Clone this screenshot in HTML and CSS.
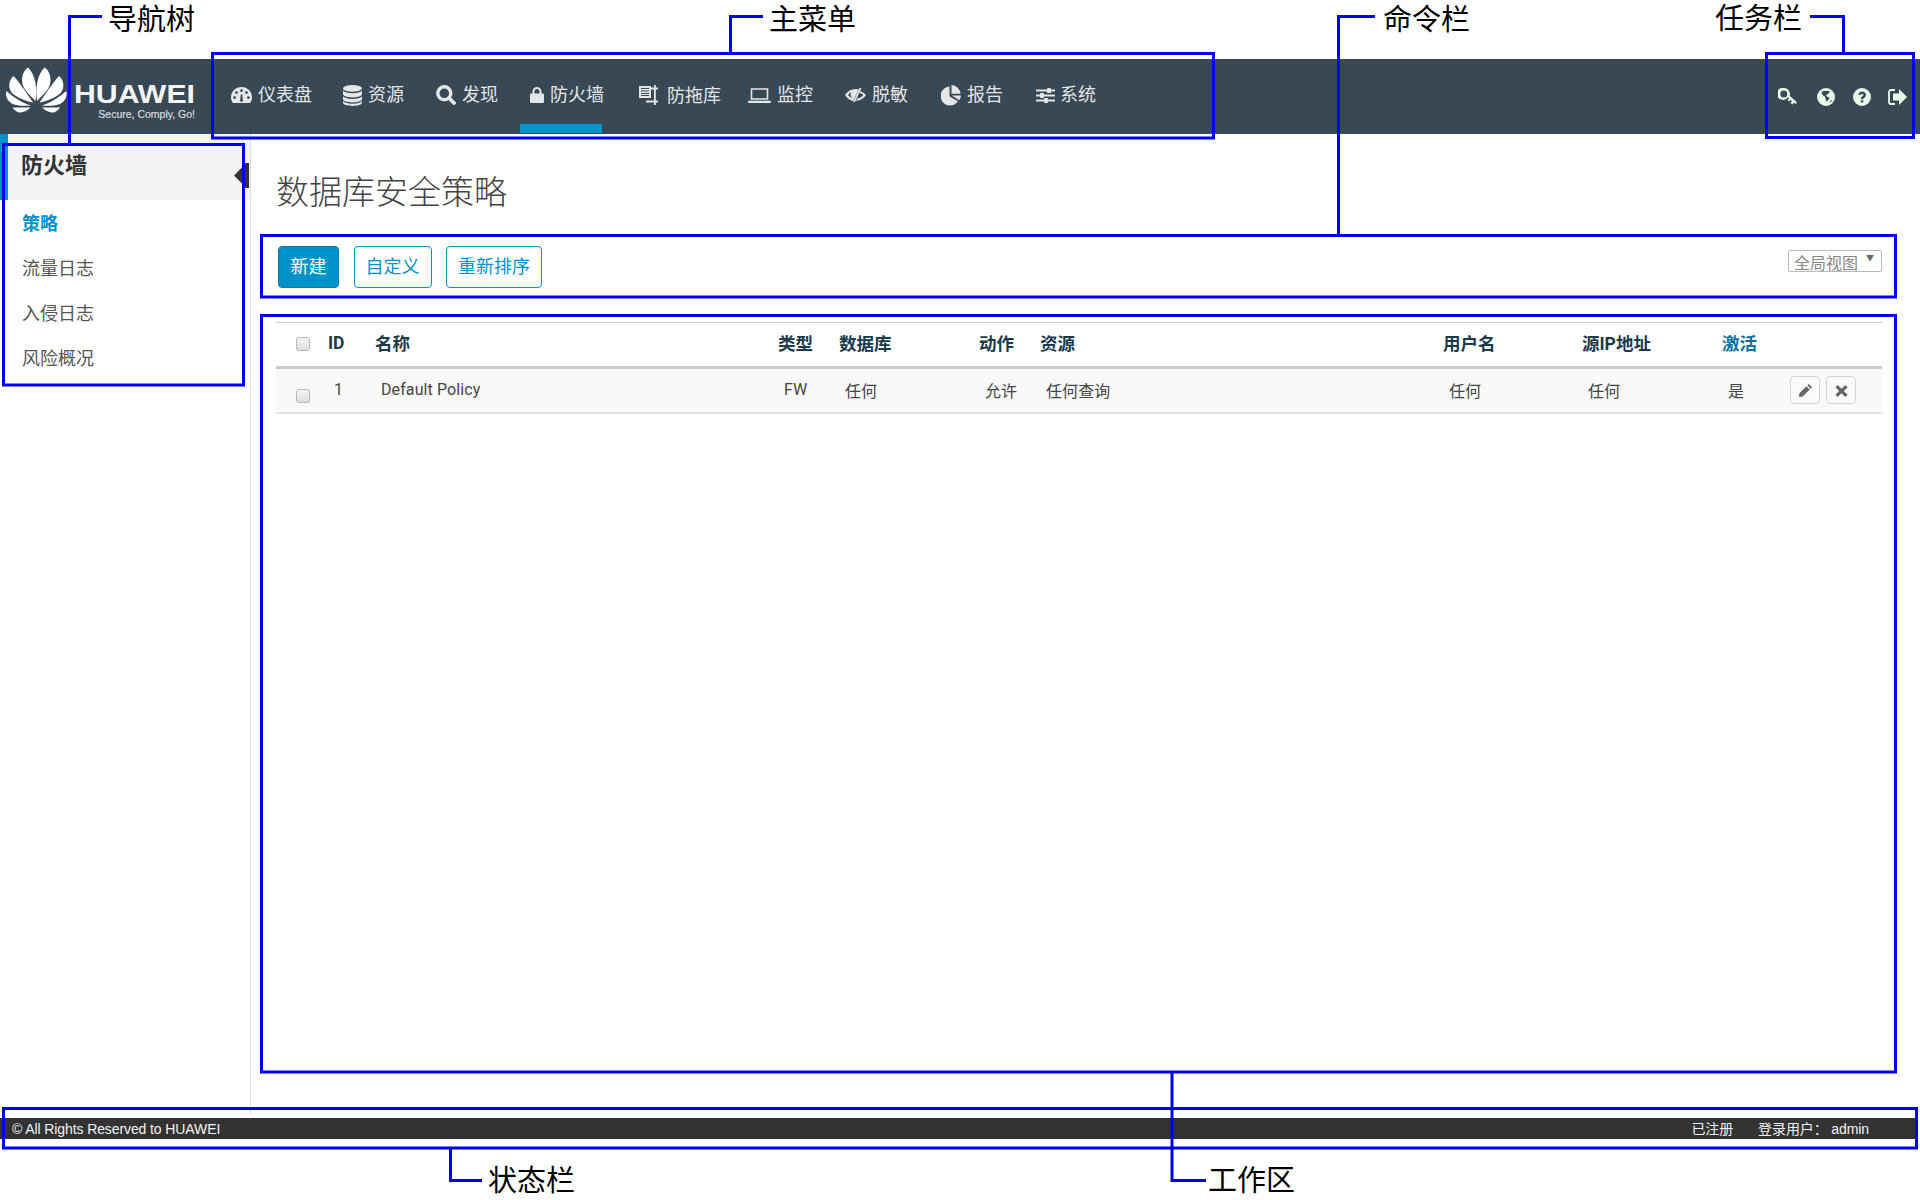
FILE: index.html
```html
<!DOCTYPE html>
<html lang="zh-CN">
<head>
<meta charset="utf-8">
<title>数据库安全策略</title>
<link rel="stylesheet" href="styles.css">
</head>
<body>
<div class="page">
  <header class="topbar">
    <div class="brand">
      <svg class="petals" viewBox="0 0 72 48" aria-hidden="true">
        <path d="M35.500 34C37.500 21 35.500 8 28 .5C23.500 3.500 21 10 22.500 17C24.500 24 31 29 35.500 34Z"/>
        <path d="M33 35.500C28 28 20 16 13.500 9C8 14 8 22 12.500 26.500C18.500 31.500 26 34 33 35.500Z"/>
        <path d="M31 38.500C22 36 13 30 6.500 24C4.500 30 9 36 14 37.500C19 39 25 39 31 38.500Z"/>
        <path d="M30.500 40.500L12.500 40.500C14.500 43.500 18 46 21 45.500C25 45 28 43 30.500 40.500Z"/>
        <g transform="matrix(-1 0 0 1 72.600 0)">
          <path d="M35.500 34C37.500 21 35.500 8 28 .5C23.500 3.500 21 10 22.500 17C24.500 24 31 29 35.500 34Z"/>
          <path d="M33 35.500C28 28 20 16 13.500 9C8 14 8 22 12.500 26.500C18.500 31.500 26 34 33 35.500Z"/>
          <path d="M31 38.500C22 36 13 30 6.500 24C4.500 30 9 36 14 37.500C19 39 25 39 31 38.500Z"/>
          <path d="M30.500 40.500L12.500 40.500C14.500 43.500 18 46 21 45.500C25 45 28 43 30.500 40.500Z"/>
        </g>
      </svg>
      <div class="wordmark">
        <span class="wordmark-name">HUAWEI</span>
        <span class="wordmark-tag">Secure, Comply, Go!</span>
      </div>
    </div>
    <nav class="mainmenu">
      <a class="menu-item m1">
        <svg class="ic ic-gauge" viewBox="0 0 21 16"><path fill-rule="evenodd" d="M10.500 0C4.700 0 0 4.600 0 10.300C0 12.200.5 14 1.400 15.500C1.600 15.800 1.900 16 2.300 16H18.700C19.100 16 19.400 15.800 19.600 15.500C20.500 14 21 12.200 21 10.300C21 4.600 16.300 0 10.500 0ZM3.600 12A1.400 1.400 0 1 1 3.600 9.200A1.400 1.400 0 0 1 3.600 12ZM5.500 7A1.400 1.400 0 1 1 5.500 4.200A1.400 1.400 0 0 1 5.500 7ZM10.500 5A1.400 1.400 0 1 1 10.500 2.200A1.400 1.400 0 0 1 10.500 5ZM9 14.500L9.800 7.500H11.200L12 14.500ZM15.500 7A1.400 1.400 0 1 1 15.500 4.200A1.400 1.400 0 0 1 15.500 7ZM17.400 12A1.400 1.400 0 1 1 17.400 9.200A1.400 1.400 0 0 1 17.400 12Z"/></svg>
        <span>仪表盘</span>
      </a>
      <a class="menu-item m2">
        <svg class="ic ic-db" viewBox="0 0 19 21"><ellipse cx="9.500" cy="3.400" rx="9.500" ry="3.400"/><path d="M0 5.600C1.500 7.400 5 8.300 9.500 8.300S17.500 7.400 19 5.600V9C19 11 15 12.400 9.500 12.400S0 11 0 9Z"/><path d="M0 11.200C1.500 13 5 13.900 9.500 13.900S17.500 13 19 11.200V14C19 16 15 17.400 9.500 17.400S0 16 0 14Z"/><path d="M0 16C1.500 17.800 5 18.800 9.500 18.800S17.500 17.800 19 16V17.600C19 19.600 15 21 9.500 21S0 19.600 0 17.600Z"/></svg>
        <span>资源</span>
      </a>
      <a class="menu-item m3">
        <svg class="ic ic-search" viewBox="0 0 20 20"><circle cx="8.300" cy="8.300" r="6.500" fill="none" stroke="currentColor" stroke-width="3.400"/><path d="M13 13L18 18" fill="none" stroke="currentColor" stroke-width="3.800" stroke-linecap="round"/></svg>
        <span>发现</span>
      </a>
      <a class="menu-item m4 is-active">
        <svg class="ic ic-lock" viewBox="0 0 14 16"><path d="M3.500 7V4.500a3.500 3.500 0 0 1 7 0V7" fill="none" stroke="currentColor" stroke-width="2"/><rect y="6.500" width="14" height="9.500" rx="1.200"/></svg>
        <span>防火墙</span>
      </a>
      <a class="menu-item m5">
        <svg class="ic ic-drag" viewBox="0 0 19 20"><path d="M0 1H12V13H0ZM2 3V4H10V3ZM2 5.500V6.500H10V5.500ZM2 8V9H10V8ZM2 10V11H10V10Z" fill-rule="evenodd"/><path d="M15 0H16.800V20H15V0ZM11 2.500H19V4.500H11ZM7 15.500H19V17.500H7Z"/></svg>
        <span>防拖库</span>
      </a>
      <a class="menu-item m6">
        <svg class="ic ic-laptop" viewBox="0 0 23 15"><path d="M3.500 1H19.500V11H3.500Z" fill="none" stroke="currentColor" stroke-width="1.600"/><rect y="12.800" width="23" height="2.200" rx="1"/></svg>
        <span>监控</span>
      </a>
      <a class="menu-item m7">
        <svg class="ic ic-eye" viewBox="0 0 21 14"><path fill-rule="evenodd" d="M0 7C2.500 3 6.500 1 10.500 1C11.500 1 12.500 1.100 13.500 1.400L8 13C5 12.300 2 10.200 0 7ZM3 7C4 8.300 5.500 9.500 7 10.200L5.600 7.200C5.500 5.800 5.800 4.700 6.500 3.900C5.200 4.600 4 5.700 3 7Z"/><path d="M14.500 0H16.500L10 14H8Z"/><path d="M14.800 3C17.300 4 19.500 5.200 21 7C19 10 15.500 12.500 11 13L12.500 10.400C15 10 17 8.800 18.300 7C17.200 6 16 5.200 14 4.800Z"/></svg>
        <span>脱敏</span>
      </a>
      <a class="menu-item m8">
        <svg class="ic ic-pie" viewBox="0 0 20 21"><path d="M8.500 1.500A9.500 9.500 0 1 0 17 16.200L8.500 11.500Z"/><path d="M10.500 0A9.500 9.500 0 0 1 19.500 8.800H10.500Z"/><path d="M10.800 10.500H20A9.500 9.500 0 0 1 18.400 15.200Z"/></svg>
        <span>报告</span>
      </a>
      <a class="menu-item m9">
        <svg class="ic ic-sliders" viewBox="0 0 19 15"><path d="M0 1.500H19V3.500H0ZM0 6.500H19V8.500H0ZM0 11.500H19V13.500H0Z"/><rect x="11" y="0" width="4" height="5" rx=".8"/><rect x="4" y="5" width="4" height="5" rx=".8"/><rect x="8" y="10" width="4" height="5" rx=".8"/></svg>
        <span>系统</span>
      </a>
    </nav>
    <div class="taskbar">
      <svg class="task-ic task-key" viewBox="0 0 19 18"><path fill-rule="evenodd" d="M6 0A6 6 0 0 1 11.700 7.700L19 14.500L17.500 16L16 14.600L14.500 16.500L12.500 15L14 13.200L12.500 11.900L11 13.500L9.500 12L11 10.400L9.900 9.300A6 6 0 1 1 6 0ZM5.800 2.500A3.500 3.500 0 1 0 5.800 9.500A3.500 3.500 0 0 0 5.800 2.500Z"/></svg>
      <svg class="task-ic task-globe" viewBox="0 0 18 18"><path fill-rule="evenodd" d="M9 0A9 9 0 1 1 9 18A9 9 0 0 1 9 0ZM4.500 4C5 6.500 6 8 8 8.500C8.500 10 8.500 12 10 13.500C11 12.500 12 11.500 12.500 10C11 9 9.500 8.500 9 7C10.500 6.500 12.500 5.500 12.800 3.500C10.500 2.300 7 2.500 4.500 4ZM14 12C13.500 13 13 14 12 15C13.500 14.500 14.500 13.500 15 12Z"/></svg>
      <svg class="task-ic task-help" viewBox="0 0 18 18"><path fill-rule="evenodd" d="M9 0A9 9 0 1 1 9 18A9 9 0 0 1 9 0ZM5.200 6.200L7.400 7.300C7.700 6.500 8.200 6 9 6C9.800 6 10.400 6.400 10.400 7C10.400 8.100 7.900 8.500 7.900 10.700V11.300H10.300C10.300 9.700 13 9.300 13 6.900C13 4.900 11.200 3.600 9.100 3.600C7.300 3.600 6 4.600 5.200 6.200ZM7.900 12.200V14.500H10.300V12.200Z"/></svg>
      <svg class="task-ic task-out" viewBox="0 0 19 16"><path d="M7 1H3A2 2 0 0 0 1 3V13A2 2 0 0 0 3 15H7" fill="none" stroke="currentColor" stroke-width="1.800"/><path d="M11 0L19 8L11 16V11.500H5V4.500H11Z"/></svg>
    </div>
  </header>

  <div class="body">
    <aside class="sidebar">
      <div class="side-head"><h2 class="side-title">防火墙</h2><span class="collapse"></span></div>
      <ul class="side-list">
        <li class="side-item is-current">策略</li>
        <li class="side-item">流量日志</li>
        <li class="side-item">入侵日志</li>
        <li class="side-item">风险概况</li>
      </ul>
    </aside>
    <main class="main">
      <h1 class="page-title">数据库安全策略</h1>
      <div class="commands">
        <div class="cmd-buttons">
          <button class="btn btn-primary">新建</button>
          <button class="btn">自定义</button>
          <button class="btn">重新排序</button>
        </div>
        <div class="view-select"><span>全局视图</span><i class="view-caret">▼</i></div>
      </div>
      <table class="grid">
        <colgroup>
          <col class="c-check"><col class="c-id"><col class="c-name"><col class="c-type"><col class="c-db"><col class="c-act"><col class="c-res"><col class="c-user"><col class="c-ip"><col class="c-on"><col class="c-ops">
        </colgroup>
        <thead>
          <tr>
            <th><input class="check" type="checkbox"></th>
            <th>ID</th><th>名称</th><th>类型</th><th>数据库</th><th>动作</th><th>资源</th><th>用户名</th><th>源IP地址</th><th class="is-sorted">激活</th><th></th>
          </tr>
        </thead>
        <tbody>
          <tr>
            <td class="cell-check"><input class="check" type="checkbox"></td>
            <td>1</td><td>Default Policy</td><td>FW</td><td>任何</td><td>允许</td><td>任何查询</td><td>任何</td><td>任何</td><td>是</td>
            <td class="cell-ops">
              <button class="op"><svg viewBox="0 0 16 16"><path d="M11.500 1L15 4.500L13.500 6L10 2.500ZM9 3.500L12.500 7L5 14.500L1 15L1.500 11Z"/></svg></button>
              <button class="op"><svg viewBox="0 0 16 16"><path d="M4 2L8 6L12 2L14.500 4.500L10.500 8.500L14.500 12.500L12 15L8 11L4 15L1.500 12.500L5.500 8.500L1.500 4.500Z"/></svg></button>
            </td>
          </tr>
        </tbody>
      </table>
    </main>
  </div>

  <footer class="statusbar">
    <span>© All Rights Reserved to HUAWEI</span>
    <span class="status-right"><span>已注册</span><span>登录用户： admin</span></span>
  </footer>
</div>

<svg class="marks" viewBox="0 0 1920 1200" aria-hidden="true">
  <rect x="212.500" y="53.500" width="1001" height="84.500"/>
  <rect x="3.500" y="144.500" width="240" height="240.500"/>
  <rect x="261.500" y="235.500" width="1634" height="61.500"/>
  <rect x="261.500" y="315.500" width="1634" height="756.500"/>
  <rect x="1766.500" y="53.500" width="147" height="84"/>
  <rect x="3.500" y="1108.500" width="1913" height="39.500"/>
  <path d="M102 16.500H69.500V143"/>
  <path d="M763 16.500H730.500V52"/>
  <path d="M1375 16.500H1338.500V234"/>
  <path d="M1810 16.500H1843.500V52"/>
  <path d="M450.500 1149V1180.500H482"/>
  <path d="M1172 1073V1180.500H1206"/>
</svg>
<span class="mark-label l-nav">导航树</span>
<span class="mark-label l-menu">主菜单</span>
<span class="mark-label l-cmd">命令栏</span>
<span class="mark-label l-task">任务栏</span>
<span class="mark-label l-status">状态栏</span>
<span class="mark-label l-work">工作区</span>
</body>
</html>
```

FILE: styles.css
```css
* { box-sizing: border-box; }
html, body { margin: 0; height: 100%; overflow: hidden; }
body {
  position: relative;
  background: #fff;
  color: #333;
  font-family: Roboto, "Noto Sans CJK SC", sans-serif;
}
.page { display: flex; flex-direction: column; height: 1200px; padding-top: 59px; }

/* top bar */
.topbar {
  display: flex;
  align-items: stretch;
  height: 75px;
  flex: none;
  background: #384854;
  color: #e4e6e8;
}
.brand { width: 228px; flex: none; display: flex; padding: 8px 0 0 0; color: #fff; }
.petals { width: 72px; height: 48px; fill: #fff; flex: none; }
.wordmark { display: flex; flex-direction: column; align-items: flex-end; width: 119px; margin-left: 4px; padding-top: 15px; }
.wordmark-name {
  font: 700 25px/25px "Liberation Sans", sans-serif;
  color: #f4f5f6;
  transform: scaleX(1.21);
  transform-origin: right;
}
.wordmark-tag { font: 400 10.500px/12px "Liberation Sans", sans-serif; color: #d8dcdf; margin-top: 1px; -webkit-text-stroke: .2px #d8dcdf; }

.mainmenu { display: flex; flex: none; padding-left: 3px; }
.menu-item {
  display: flex;
  align-items: center;
  height: 75px;
  padding-bottom: 3px;
  font-size: 18px;
  line-height: 24px;
  white-space: nowrap;
}
.menu-item span { display: block; }
.ic { display: block; flex: none; fill: currentColor; margin-right: 6px; }
.ic-gauge { width: 21px; height: 16px; }
.ic-db { width: 19px; height: 21px; }
.ic-search { width: 20px; height: 20px; }
.ic-lock { width: 14px; height: 16px; }
.ic-drag { width: 19px; height: 20px; margin-right: 9px; }
.ic-laptop { width: 23px; height: 15px; }
.ic-eye { width: 21px; height: 14px; }
.ic-pie { width: 20px; height: 21px; }
.ic-sliders { width: 19px; height: 15px; margin-right: 5px; }
.m1 { width: 112px; }
.m2 { width: 93px; }
.m3 { width: 94px; }
.m4 { width: 109px; position: relative; }
.m5 { width: 109px; }
.m5 span { padding-top: 2px; }
.m6 { width: 97px; }
.m7 { width: 96px; }
.m8 { width: 95px; }
.m4.is-active::after {
  content: "";
  position: absolute;
  left: -10px;
  bottom: 1px;
  width: 82px;
  height: 9px;
  background: #0093c9;
}
.taskbar { margin-left: auto; color: #ebfbe9; display: flex; align-items: flex-start; padding: 29px 13px 0 0; }
.task-ic { display: block; fill: currentColor; flex: none; }
.task-key { width: 19px; height: 18px; margin-right: 20px; }
.task-globe { width: 18px; height: 18px; margin-right: 18px; }
.task-help { width: 18px; height: 18px; margin-right: 17px; }
.task-out { width: 19px; height: 16px; margin-top: 1px; }

/* body */
.body { display: flex; height: 980px; flex: none; }
.sidebar { width: 251px; flex: none; border-right: 1px solid #ddd; }
.side-head {
  position: relative;
  height: 66px;
  background: #f4f4f4;
  border-left: 8px solid #0093c9;
  padding: 17px 0 0 13px;
}
.side-title { margin: 0; font-size: 22px; line-height: 30px; font-weight: 700; color: #333; }
.collapse {
  position: absolute;
  right: 1px;
  top: 29px;
  width: 15px;
  height: 25px;
  background: #333;
  clip-path: polygon(0 50%, 9px 14%, 9px 0, 100% 0, 100% 100%, 9px 100%, 9px 86%);
}
.side-list { list-style: none; margin: 0; padding: 1px 0 0 22px; }
.side-item { height: 45px; line-height: 45px; font-size: 18px; color: #555; }
.side-item.is-current { color: #0093c9; font-weight: 700; }

.main { flex: 1; min-width: 0; padding: 35px 38px 0 25px; }
.page-title { margin: 0; height: 48px; font-size: 33px; line-height: 48px; font-weight: 300; color: #444; }
.commands { display: flex; justify-content: space-between; align-items: flex-start; margin-top: 29px; height: 76px; padding-left: 2px; }
.cmd-buttons { display: flex; gap: 14.500px; }
.btn {
  height: 42px;
  padding: 0 11px;
  border: 1px solid #0093c9;
  border-radius: 4px;
  background: #fff;
  color: #0093c9;
  font: 18px/24px Roboto, "Noto Sans CJK SC", sans-serif;
}
.btn-primary { padding: 0 11.500px; background: #0093c9; color: #fff; border-color: #0b7ba6; }
.view-select {
  display: flex;
  justify-content: space-between;
  width: 94px;
  height: 22px;
  margin-top: 4px;
  padding: 0 7px 0 5px;
  border: 1px solid #bbb;
  border-radius: 2px;
  font-size: 16px;
  line-height: 26px;
  overflow: hidden;
  color: #888;
}
.view-caret { font-style: normal; font-size: 8px; line-height: 15px; color: #666; }

.grid { width: 1606px; border-collapse: collapse; table-layout: fixed; border-top: 1px solid #ccc; }
.c-check { width: 52px; } .c-id { width: 47px; } .c-name { width: 403px; } .c-type { width: 61px; }
.c-db { width: 140px; } .c-act { width: 61px; } .c-res { width: 403px; } .c-user { width: 139px; }
.c-ip { width: 140px; } .c-on { width: 68px; } .c-ops { width: 92px; }
.grid th {
  height: 45px;
  padding: 0 0 4px;
  text-align: left;
  font-size: 17.500px;
  font-weight: 700;
  color: #1b3a4b;
  border-bottom: 3px solid #ccc;
  white-space: nowrap;
}
.grid td {
  height: 45px;
  padding: 0 0 1px 6px;
  font-size: 16px;
  color: #444;
  background: #f9f9f9;
  border-bottom: 2px solid #e3e3e3;
  white-space: nowrap;
  letter-spacing: .1px;
}
.grid th.is-sorted { color: #0a6fa0; }
.grid td.cell-check { padding: 0; }
.check {
  appearance: none;
  display: block;
  width: 14px;
  height: 14px;
  margin: 2px 0 0 20px;
  border: 1px solid #bbb;
  border-radius: 3px;
  background: linear-gradient(#f4f4f4, #dedede);
}
.cell-check .check { margin-top: 12px; }
.grid td.cell-ops { padding: 0; font-size: 0; }
.op {
  display: inline-flex;
  align-items: center;
  justify-content: center;
  width: 30px;
  height: 28px;
  margin-right: 6px;
  padding: 0;
  border: 1px solid #d4d4d4;
  border-radius: 4px;
  background: #fafafa;
}
.op svg { width: 15px; height: 15px; fill: #666; display: block; }

/* status bar */
.statusbar {
  display: flex;
  justify-content: space-between;
  align-items: center;
  flex: none;
  height: 21px;
  margin: 4px 3px 0 0;
  padding: 1px 48px 0 12px;
  background: #333;
  color: #f2f2f2;
  font: 14px/20px "Liberation Sans", "Noto Sans CJK SC", sans-serif;
  letter-spacing: -.1px;
}
.status-right { display: flex; gap: 25px; }

/* annotation layer */
.marks {
  position: absolute;
  left: 0;
  top: 0;
  width: 1920px;
  height: 1200px;
  pointer-events: none;
  fill: none;
  stroke: #0000f0;
  stroke-width: 3;
}
.mark-label {
  position: absolute;
  font: 400 29px/32px "Liberation Sans", "Noto Sans CJK SC", sans-serif;
  color: #000;
  white-space: nowrap;
}
.l-nav { left: 108px; top: 4px; }
.l-menu { left: 769px; top: 4px; }
.l-cmd { left: 1383px; top: 4px; }
.l-task { left: 1715px; top: 3px; }
.l-status { left: 488px; top: 1165px; }
.l-work { left: 1208px; top: 1165px; }
```
